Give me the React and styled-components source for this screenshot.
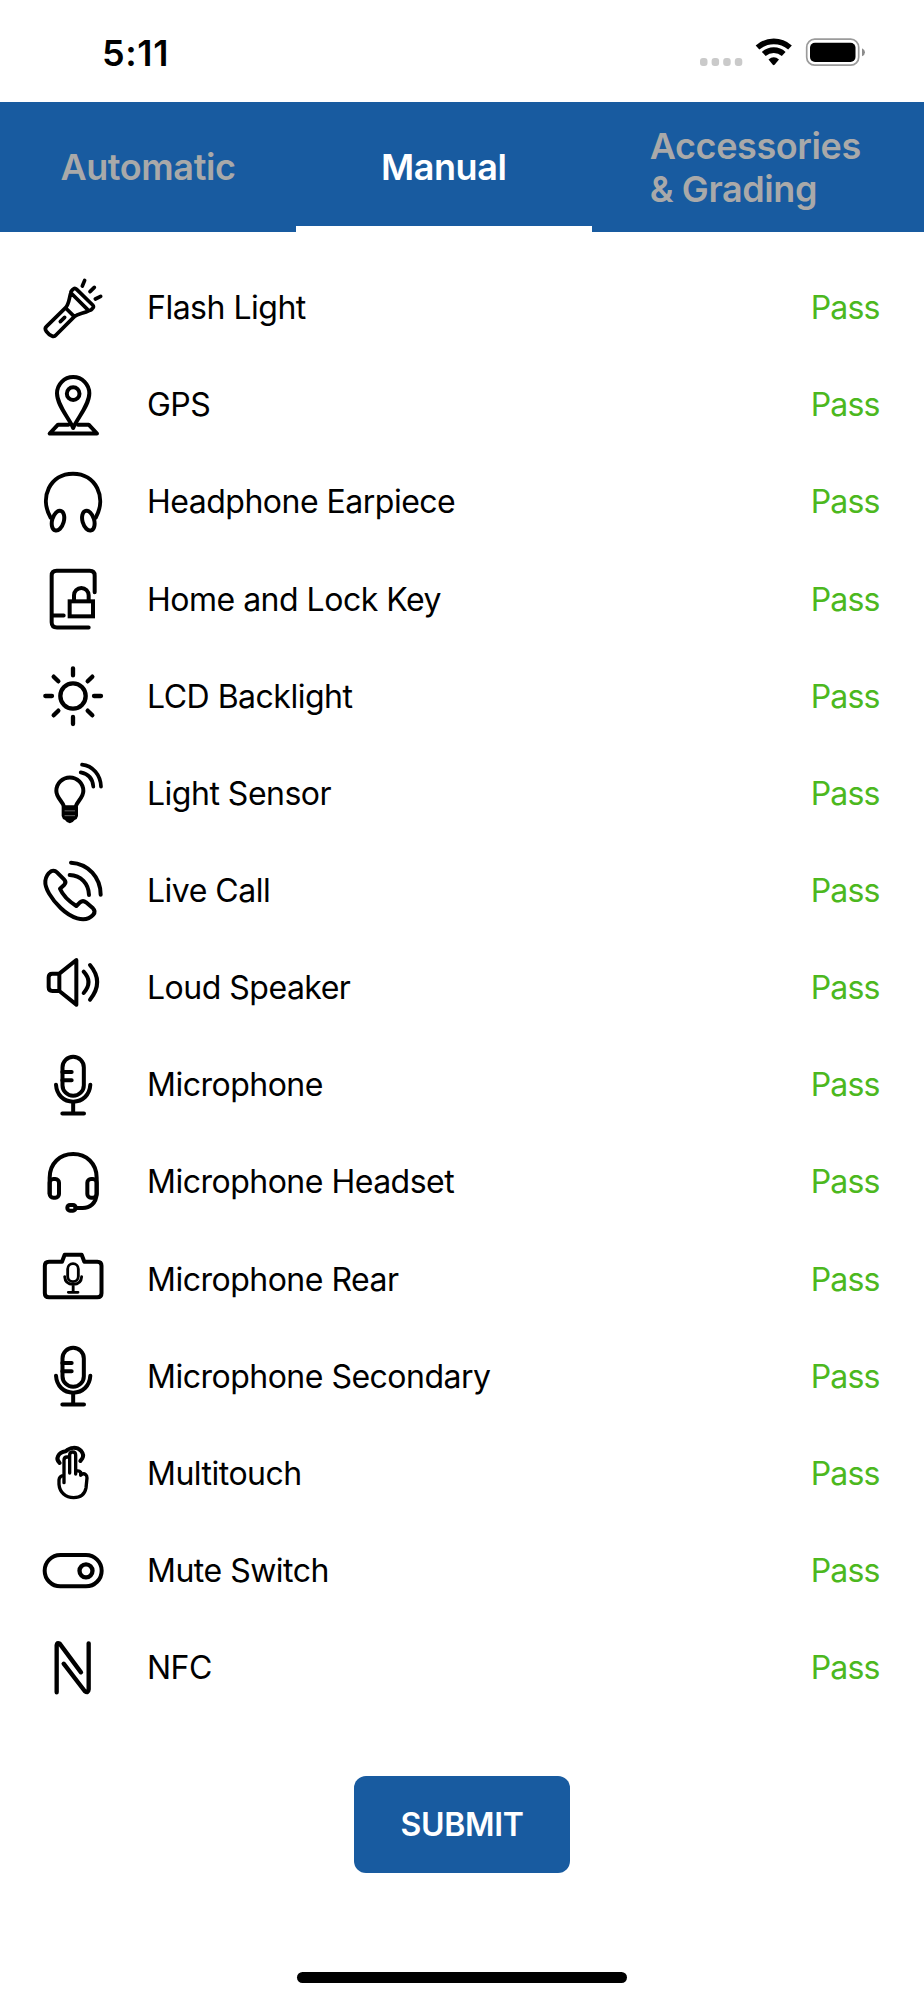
import React, { useState } from 'react'
import styled, { createGlobalStyle } from 'styled-components'

const mic = (
  <>
    <rect x="58.5" y="5.5" width="64" height="117" rx="32" />
    <path d="M58 51H86M58 76H86M39 89C41 120 62 140 90.500 140S140 120 142 89M90.500 141V175M58 175.500H123" />
  </>
)

const icons = {
  flash: (
    <path d="M90 34Q95 28 101 34L149 81Q154 87 148 92L144 96Q139 99 134 95L87 48Q82 43 85 39ZM83 46C78 62 79 76 68 89L10 146Q4 152 10 160C15 167 20 171 27 174Q34 177 39 171L94 116C106 106 122 107 138 98M68 90L94 116M52 131L65 118M118 24L125 7M141 41L154 28M157 63L173 55" strokeWidth="11" />
  ),
  gps: (
    <>
      <path d="M90.500 159C78 129 42 91 42 55A48.500 49 0 0 1 139 55C139 91 103 129 90.500 159Z" />
      <circle cx="90.500" cy="56" r="19" />
      <path d="M76 149H45L20 175.500H162L137 149H105" />
    </>
  ),
  headphone: (
    <>
      <path d="M23 137C-12 77 21 5 90 5S192 77 158 137" />
      <ellipse cx="45" cy="146" rx="17.500" ry="30.500" transform="rotate(16 45 146)" />
      <ellipse cx="136" cy="146" rx="17.500" ry="30.500" transform="rotate(-16 136 146)" />
    </>
  ),
  lock: (
    <>
      <path d="M155 70V20Q155 5.500 140 5.500H41Q26 5.500 26 20V160Q26 175.500 42 175.500H137M27 139.500H62" />
      <rect x="80" y="97" width="70" height="45" strokeLinejoin="miter" />
      <path d="M93 96V79a22 22 0 0 1 44 0V96" />
    </>
  ),
  sun: (
    <>
      <circle cx="90" cy="90" r="38" strokeWidth="13" />
      <path d="M90 7V28M90 153V174M7 90H27M153 90H174M32 32L46 46M134 134L148 148M148 32L134 46M46 134L32 148" strokeWidth="13" />
    </>
  ),
  sensor: (
    <>
      <path d="M64 133C60 115 40 105 40 84A40.500 40.500 0 0 1 121 84C121 105 101 115 97 133Z" />
      <path d="M56 130H105V159Q103 169 95 171Q88 181 80.500 181T66 171Q58 169 56 159Z" fill="#000" stroke="none" />
      <path d="M66 143.500H95M66 158H95" stroke="#999" strokeWidth="2" />
      <path d="M113 28Q149 35 151 71M117 5C150 8 173 37 174 71" strokeWidth="11" />
    </>
  ),
  call: (
    <path d="M42 34L63 55Q71 63 64 71L51 83Q63 111 100 135L111 124Q120 117 129 124L150 142Q159 151 151 161C125 190 81 168 53 141C24 113 5 81 7 60Q9 41 24 31Q34 26 42 34ZM84 5C136 8 173 49 173 101M80 42C114 43 137 68 138 102" />
  ),
  speaker: (
    <path d="M49 47V99M49 47H28Q17 47 17 58V88Q17 99 28 99H49L100 140V6ZM122 41Q151 72 122 105M141 21Q184 72 141 125" />
  ),
  mic,
  headset: (
    <>
      <path d="M20 125V77C20 34 51 6 90.500 6S161 34 161 77V125C160 154 140 168 119 168H97" />
      <rect x="20" y="81" width="28" height="56" rx="11" />
      <rect x="133" y="81" width="28" height="56" rx="11" />
      <rect x="73" y="159" width="25" height="17" rx="8" />
    </>
  ),
  rear: (
    <>
      <path d="M57 38H18Q5.500 38 5.500 50V133Q5.500 145 18 145H163Q175.500 145 175.500 133V50Q175.500 38 163 38H124L116 17H65Z" />
      <g strokeWidth="8.500">
        <rect x="74" y="44" width="32" height="54" rx="16" />
        <path d="M65 83C66 99 77 106 90.500 106S115 99 116 83M90.500 106V130M76 130H105" />
      </g>
    </>
  ),
  touch: (
    <>
      <path d="M63 119V52Q63 42 72 42H76Q80 43 80 51V90M80 51V36Q80 27 89 27T98 36V93V85Q108 81 113 88V97Q121 89 128 95Q132 98 132 105L129 135C125 155 111 164 92 164C68 164 50 148 48 124V111Q49 99 62 97" strokeWidth="10" />
      <path d="M50 60C36 47 45 29 68 25C81 12 101 11 114 23Q124 35 118 46L112 54" />
    </>
  ),
  mute: (
    <>
      <rect x="5" y="42" width="171" height="94" rx="47" />
      <circle cx="129" cy="89.500" r="19.500" strokeWidth="13" />
    </>
  ),
  nfc: (
    <path d="M41 163V22Q42 12 50 17L114 103M62 77L125 159Q136 168 137 154V16" strokeWidth="13" />
  ),
}

const tests = [
  { name: 'Flash Light', icon: 'flash' },
  { name: 'GPS', icon: 'gps' },
  { name: 'Headphone Earpiece', icon: 'headphone' },
  { name: 'Home and Lock Key', icon: 'lock' },
  { name: 'LCD Backlight', icon: 'sun' },
  { name: 'Light Sensor', icon: 'sensor' },
  { name: 'Live Call', icon: 'call' },
  { name: 'Loud Speaker', icon: 'speaker' },
  { name: 'Microphone', icon: 'mic' },
  { name: 'Microphone Headset', icon: 'headset' },
  { name: 'Microphone Rear', icon: 'rear' },
  { name: 'Microphone Secondary', icon: 'mic' },
  { name: 'Multitouch', icon: 'touch' },
  { name: 'Mute Switch', icon: 'mute' },
  { name: 'NFC', icon: 'nfc' },
]

const tabs = ['Automatic', 'Manual', 'Accessories & Grading']

export default function App() {
  const [active, setActive] = useState('Manual')

  return (
    <Screen>
      <GlobalStyle />
      <StatusBar>
        <Time>5:11</Time>
        <StatusIcons viewBox="0 0 168 32">
          <g fill="#cacaca">
            <rect x="0" y="21" width="7.500" height="8" rx="3" />
            <rect x="11.600" y="21" width="7.500" height="8" rx="3" />
            <rect x="23.200" y="21" width="7.500" height="8" rx="3" />
            <rect x="34.800" y="21" width="7.500" height="8" rx="3" />
          </g>
          <g fill="none" stroke="#000" strokeWidth="5.600">
            <path d="M57.500 10.500C67 2.300 80.500 2.300 90 10.500" />
            <path d="M63.800 17C69.500 11.800 78 11.800 83.700 17" />
          </g>
          <path d="M68.500 22.500Q73.700 18 79 22.500L74.600 27.700Q73.700 28.600 72.800 27.700Z" />
          <rect x="106.700" y="2.200" width="52" height="26" rx="8" fill="none" stroke="#9b9b9b" strokeWidth="1.700" />
          <rect x="110" y="5.700" width="45.500" height="19.200" rx="5" />
          <path d="M162 11.200Q165 12.500 165 15.200T162 19.300Z" fill="#8c8c8c" />
        </StatusIcons>
      </StatusBar>
      <Tabs>
        {tabs.map((tab) => (
          <Tab key={tab} $active={tab === active} onClick={() => setActive(tab)}>
            <TabLabel>{tab}</TabLabel>
          </Tab>
        ))}
      </Tabs>
      <List>
        {tests.map((item) => (
          <Row key={item.name}>
            <Icon viewBox="0 0 180 180">{icons[item.icon]}</Icon>
            <Name>{item.name}</Name>
            <Result>Pass</Result>
          </Row>
        ))}
      </List>
      <Submit>SUBMIT</Submit>
      <HomeBar />
    </Screen>
  )
}

const GlobalStyle = createGlobalStyle`
    body {
        margin: 0;
        background-color: #fff;
        font-family: Inter, "Liberation Sans", sans-serif;
    }
`

const Screen = styled.div`
    box-sizing: border-box;
    display: flex;
    flex-direction: column;
    align-items: center;
    width: 924px;
    height: 2000px;
    padding-bottom: 17.5px;
    color: #000;
`

const StatusBar = styled.header`
    box-sizing: border-box;
    display: flex;
    justify-content: space-between;
    align-items: flex-start;
    width: 100%;
    height: 101.6px;
    padding: 31px 56px 0 102px;
`

const Time = styled.span`
    font-size: 36px;
    font-weight: 600;
    line-height: 44px;
    letter-spacing: 0.6px;
`

const StatusIcons = styled.svg`
    width: 168px;
    height: 32px;
    margin-top: 6px;
`

const Tabs = styled.nav`
    display: grid;
    grid-template-columns: 296px 295.5px 1fr;
    width: 100%;
    height: 130px;
    background-color: #185ba0;
`

const Tab = styled.button`
    display: flex;
    justify-content: center;
    align-items: center;
    border: none;
    border-bottom: 6px solid ${(props) => (props.$active ? '#fff' : 'transparent')};
    padding: 8px 0 0;
    background: none;
    color: ${(props) => (props.$active ? '#fff' : '#a9a9a9')};
    font-family: inherit;
    font-size: 36px;
    font-weight: 600;
    line-height: 43px;
    letter-spacing: -0.4px;
    text-align: left;
`

const TabLabel = styled.span`
    max-width: 216px;
`

const List = styled.ul`
    width: 100%;
    margin: 0;
    padding: 27.4px 0 0;
    list-style: none;
`

const Row = styled.li`
    box-sizing: border-box;
    display: flex;
    align-items: center;
    height: 97.16px;
    padding: 0 44.6px 0 43.3px;
`

const Icon = styled.svg`
    flex: none;
    width: 60px;
    height: 60px;
    margin-right: 43.7px;
    fill: none;
    stroke: #000;
    stroke-width: 12;
    stroke-linecap: round;
    stroke-linejoin: round;
    overflow: visible;
`

const Name = styled.span`
    flex: 1;
    padding-top: 1px;
    font-size: 32px;
    line-height: 40px;
    letter-spacing: -0.5px;
`

const Result = styled.span`
    padding-top: 1px;
    color: #4cb81e;
    font-size: 32px;
    line-height: 40px;
    letter-spacing: -0.9px;
`

const Submit = styled.button`
    width: 216px;
    height: 97px;
    margin-top: 59.5px;
    border: none;
    border-radius: 12px;
    padding: 1px 0 0;
    background-color: #185ba0;
    color: #fff;
    font-family: inherit;
    font-size: 32px;
    font-weight: 600;
    letter-spacing: -0.3px;
`

const HomeBar = styled.div`
    width: 330px;
    height: 11px;
    margin-top: auto;
    border-radius: 6px;
    background-color: #000;
`
